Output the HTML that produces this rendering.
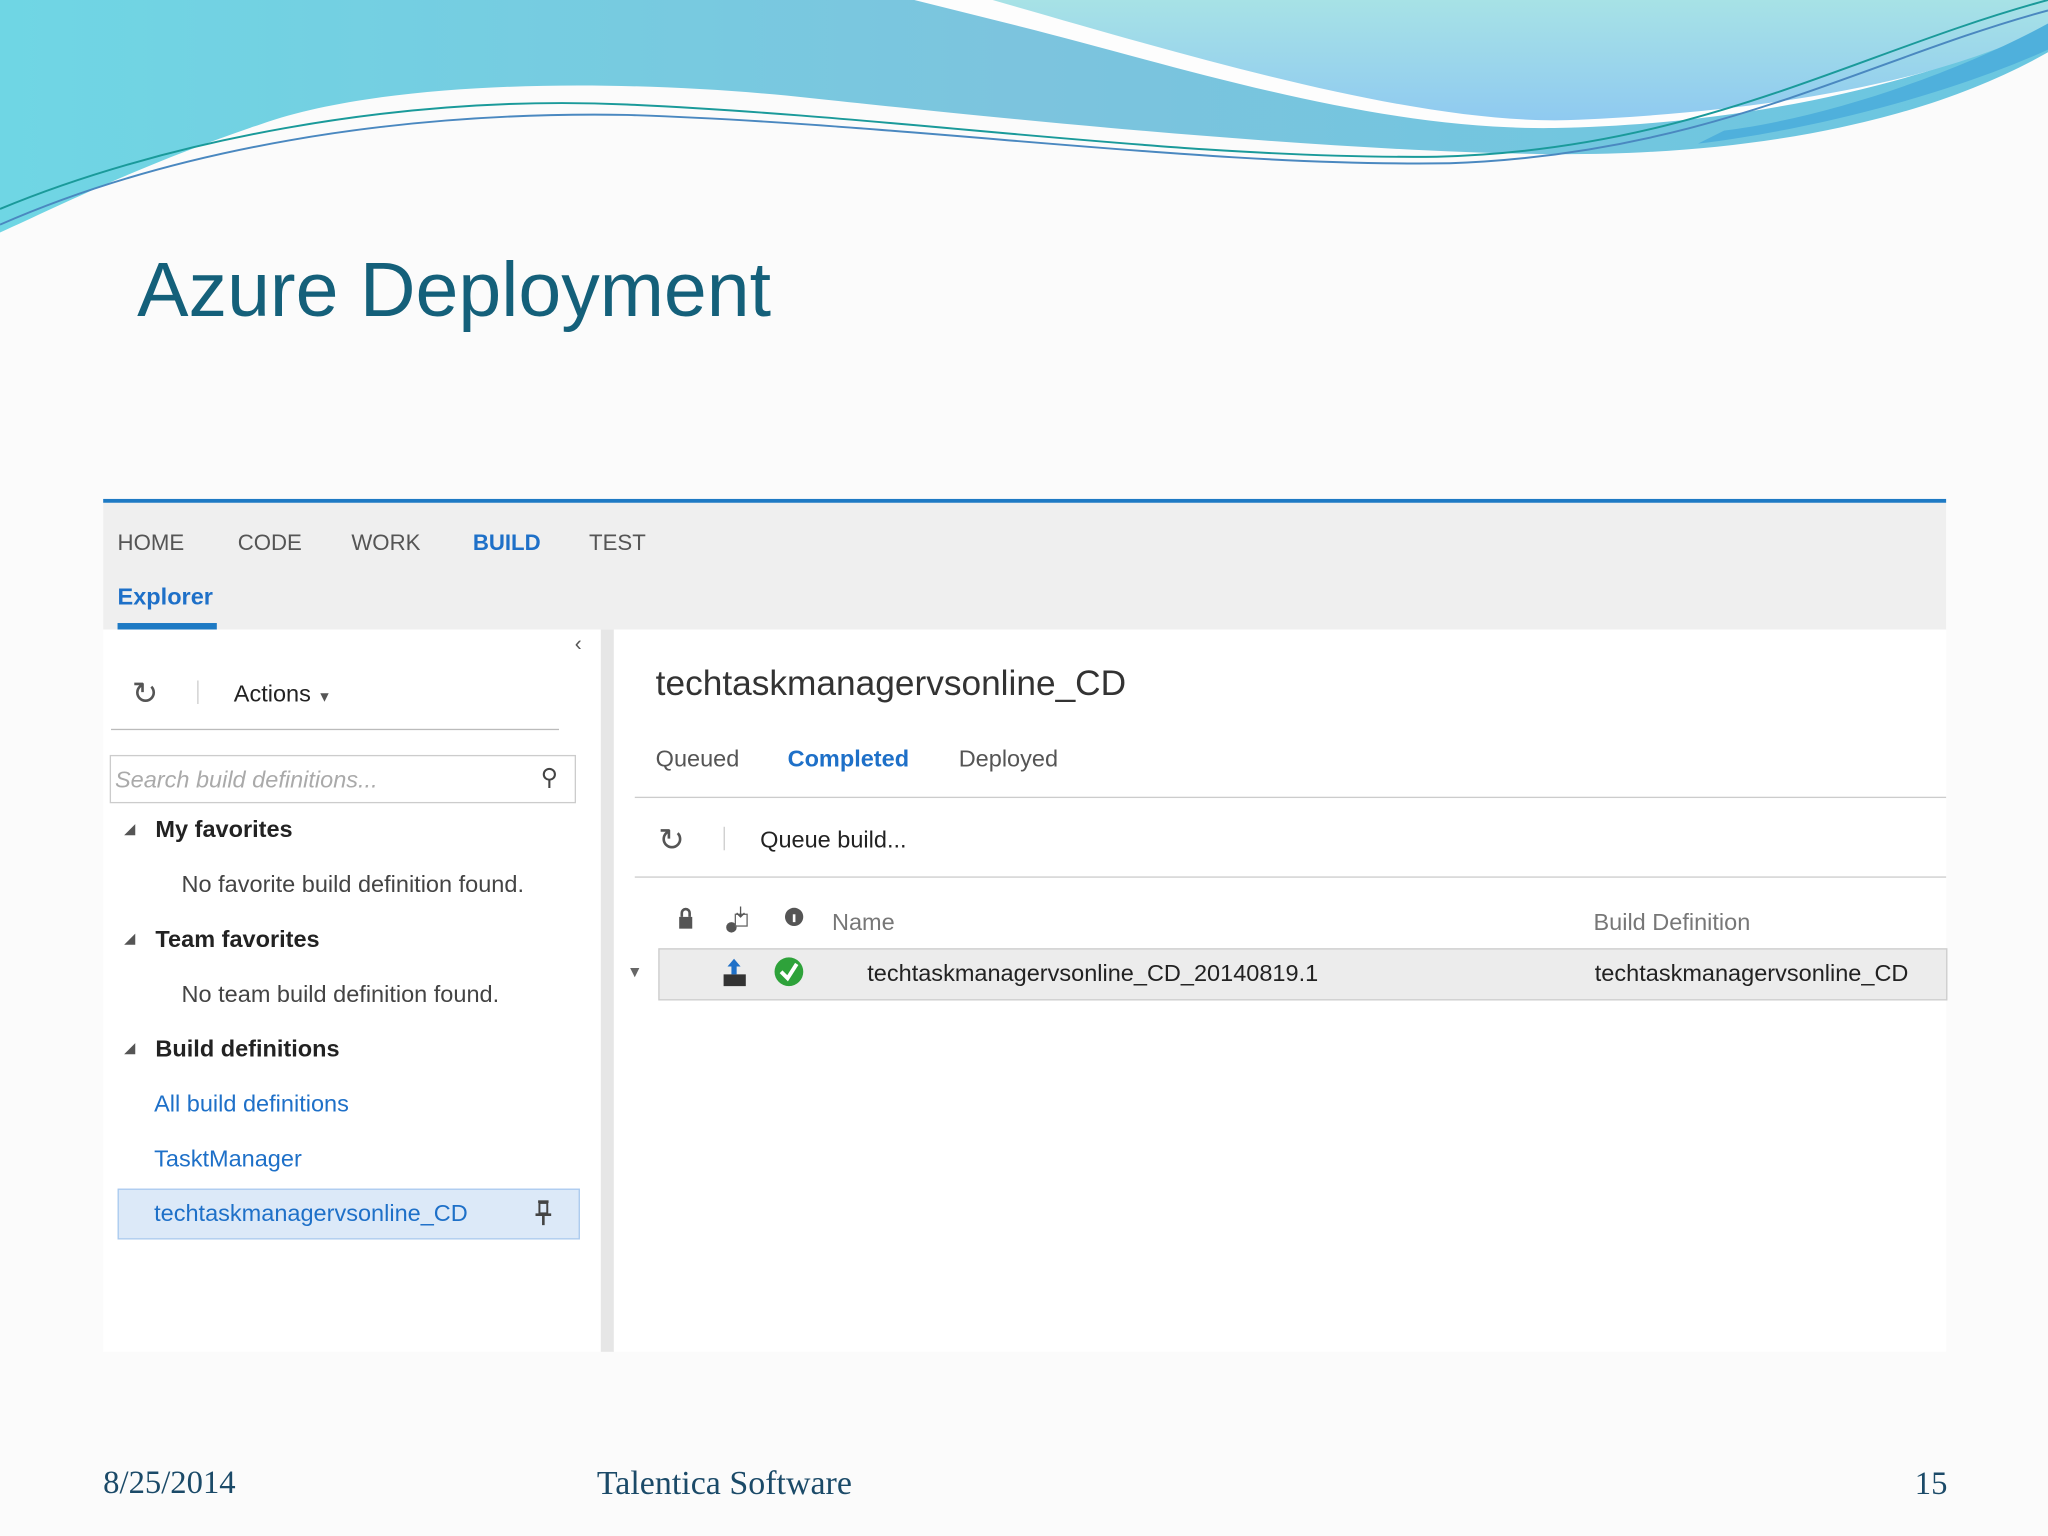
<!DOCTYPE html>
<html><head><meta charset="utf-8"><style>
html,body{margin:0;padding:0;width:2048px;height:1536px;overflow:hidden;background:#fbfbfb}
#s{position:absolute;left:0;top:0;width:1568px;height:1176px;transform:scale(1.30612);transform-origin:0 0;font-family:"Liberation Sans",sans-serif;background:#fbfbfb}
.a{position:absolute;white-space:nowrap}
.n{font-size:17px;color:#555;top:406px}
.t{font-size:17px;color:#222}
.b{color:#1e70c8}
</style></head><body><div id="s">
<svg class="a" style="left:0;top:0" width="1568" height="200" viewBox="0 0 1568 200">
<defs>
<linearGradient id="g1" x1="0" y1="0" x2="1" y2="0"><stop offset="0" stop-color="#6fd6e4"/><stop offset=".5" stop-color="#7cc4de"/><stop offset="1" stop-color="#6ac7e0"/></linearGradient>
<linearGradient id="g2" x1="0" y1="0" x2="0" y2="1"><stop offset="0" stop-color="#a7e2e6"/><stop offset="1" stop-color="#8fcaf0"/></linearGradient>
</defs>
<path d="M0 0 H1568 V40 C1480 90 1350 120 1180 118 C1000 115 760 90 620 75 C480 60 300 60 200 95 C110 125 40 160 0 178 Z" fill="url(#g1)"/>
<path d="M700 0 H1568 V20 C1480 60 1350 95 1190 98 C1050 100 900 50 780 20 Z" fill="#fdfdfd"/>
<path d="M760 0 H1568 V20 C1500 55 1380 85 1200 92 C1080 95 900 40 760 0 Z" fill="url(#g2)"/>
<path d="M1568 18 C1500 55 1400 90 1320 100 L1300 110 C1420 95 1520 60 1568 38 Z" fill="#4fb0dc"/>
<path d="M0 160 C120 110 300 72 480 80 C700 90 900 122 1100 120 C1300 115 1420 40 1568 0" fill="none" stroke="#1a9a9a" stroke-width="1.5"/>
<path d="M0 172 C130 115 300 85 480 88 C700 95 920 128 1110 125 C1310 118 1430 45 1568 8" fill="none" stroke="#4a88c0" stroke-width="1.5"/>
</svg>
<div class="a" style="left:105px;top:188px;font-size:59px;color:#14607a">Azure Deployment</div>

<div class="a" style="left:79px;top:382px;width:1411px;height:3px;background:#1e7ac4"></div>
<div class="a" style="left:79px;top:385px;width:1411px;height:97px;background:#efefef"></div>
<div class="a n" style="left:90px">HOME</div>
<div class="a n" style="left:182px">CODE</div>
<div class="a n" style="left:269px">WORK</div>
<div class="a n b" style="left:362px;font-weight:bold">BUILD</div>
<div class="a n" style="left:451px">TEST</div>
<div class="a b" style="left:90px;top:447px;font-size:18px;font-weight:bold">Explorer</div>
<div class="a" style="left:90px;top:477px;width:76px;height:5px;background:#1e7ac4"></div>

<div class="a" style="left:79px;top:482px;width:381px;height:553px;background:#fff"></div>
<div class="a" style="left:460px;top:482px;width:10px;height:553px;background:#e6e6e6"></div>
<div class="a" style="left:470px;top:482px;width:1020px;height:553px;background:#fff"></div>
<div class="a" style="left:440px;top:485px;font-size:16px;color:#555">‹</div>

<div class="a" style="left:101px;top:517px;font-size:24px;color:#555">↻</div>
<div class="a" style="left:151px;top:521px;width:1px;height:18px;background:#ccc"></div>
<div class="a t" style="left:179px;top:521px;font-size:18px">Actions <span style="font-size:11px;color:#555">▼</span></div>
<div class="a" style="left:85px;top:558px;width:343px;height:1px;background:#bbb"></div>
<div class="a" style="left:84px;top:578px;width:355px;height:35px;border:1px solid #ccc;background:#fff"></div>
<div class="a" style="left:88px;top:587px;font-size:18px;color:#aaa;font-style:italic">Search build definitions...</div>
<div class="a" style="left:414px;top:585px;font-size:18px;color:#444">⚲</div>

<div class="a" style="left:95px;top:628px;font-size:11px;color:#555">◢</div>
<div class="a t" style="left:119px;top:625px;font-size:18px;font-weight:bold">My favorites</div>
<div class="a t" style="left:139px;top:667px;font-size:18px;color:#444">No favorite build definition found.</div>
<div class="a" style="left:95px;top:712px;font-size:11px;color:#555">◢</div>
<div class="a t" style="left:119px;top:709px;font-size:18px;font-weight:bold">Team favorites</div>
<div class="a t" style="left:139px;top:751px;font-size:18px;color:#444">No team build definition found.</div>
<div class="a" style="left:95px;top:796px;font-size:11px;color:#555">◢</div>
<div class="a t" style="left:119px;top:793px;font-size:18px;font-weight:bold">Build definitions</div>
<div class="a b" style="left:118px;top:835px;font-size:18px">All build definitions</div>
<div class="a b" style="left:118px;top:877px;font-size:18px">TasktManager</div>
<div class="a" style="left:90px;top:910px;width:352px;height:37px;background:#dce9f8;border:1px solid #a9c9ee"></div>
<div class="a b" style="left:118px;top:919px;font-size:18px">techtaskmanagervsonline_CD</div>
<svg class="a" style="left:408px;top:918px" width="16" height="22"><rect x="4" y="1" width="8" height="2" fill="#444"/><rect x="5" y="3" width="6" height="8" fill="none" stroke="#444" stroke-width="1.5"/><rect x="2" y="11" width="12" height="2" fill="#444"/><rect x="7" y="13" width="2" height="7" fill="#444"/></svg>

<div class="a" style="left:502px;top:508px;font-size:27px;color:#333">techtaskmanagervsonline_CD</div>
<div class="a" style="left:502px;top:571px;font-size:18px;color:#555">Queued</div>
<div class="a b" style="left:603px;top:571px;font-size:18px;font-weight:bold">Completed</div>
<div class="a" style="left:734px;top:571px;font-size:18px;color:#555">Deployed</div>
<div class="a" style="left:486px;top:610px;width:1004px;height:1px;background:#ccc"></div>
<div class="a" style="left:504px;top:629px;font-size:24px;color:#555">↻</div>
<div class="a" style="left:554px;top:633px;width:1px;height:18px;background:#ccc"></div>
<div class="a t" style="left:582px;top:633px;font-size:18px">Queue build...</div>
<div class="a" style="left:486px;top:671px;width:1004px;height:1px;background:#ccc"></div>

<svg class="a" style="left:518px;top:694px" width="110" height="24">
<rect x="2" y="8" width="10" height="9" fill="#555"/><path d="M4 8 V5 a3 3 0 0 1 6 0 V8" fill="none" stroke="#555" stroke-width="2"/>
<circle cx="42" cy="16" r="4" fill="#555"/><rect x="45" y="6" width="9" height="9" fill="none" stroke="#666" stroke-width="1"/><path d="M49 0 V8 M46 5 L49 8 L52 5" stroke="#555" fill="none"/>
<circle cx="90" cy="8" r="7" fill="#555"/><rect x="89" y="6" width="2" height="6" fill="#fff"/>
</svg>
<div class="a" style="left:637px;top:696px;font-size:18px;color:#777">Name</div>
<div class="a" style="left:1220px;top:696px;font-size:18px;color:#777">Build Definition</div>
<div class="a" style="left:504px;top:726px;width:985px;height:38px;background:#ececec;border:1px solid #ccc"></div>
<div class="a" style="left:480px;top:737px;font-size:12px;color:#666">▼</div>
<svg class="a" style="left:552px;top:732px" width="70" height="26">
<rect x="2" y="14" width="17" height="9" fill="#333"/><path d="M10 2 L5 8 H8 V14 H12 V8 H15 Z" fill="#1e70c8"/>
<circle cx="52" cy="12" r="11" fill="#2ea23a"/><path d="M46 12 L51 17 L58 6" fill="none" stroke="#fff" stroke-width="3"/>
</svg>
<div class="a t" style="left:664px;top:735px;font-size:18px">techtaskmanagervsonline_CD_20140819.1</div>
<div class="a t" style="left:1221px;top:735px;font-size:18px">techtaskmanagervsonline_CD</div>

<div class="a" style="left:79px;top:1122px;font-size:25px;color:#1b4a68;font-family:'Liberation Serif',serif">8/25/2014</div>
<div class="a" style="left:457px;top:1121px;font-size:26px;color:#1b4a68;font-family:'Liberation Serif',serif">Talentica Software</div>
<div class="a" style="left:1466px;top:1123px;font-size:25px;color:#1b4a68;font-family:'Liberation Serif',serif">15</div>
</div></body></html>
